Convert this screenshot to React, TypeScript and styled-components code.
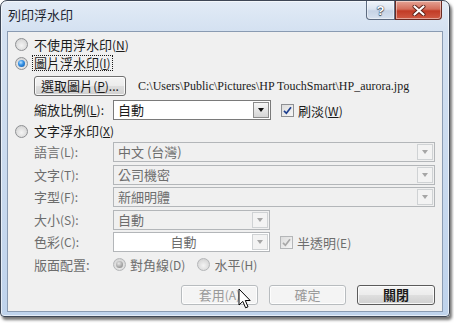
import styled, { createGlobalStyle } from "styled-components";

const GlobalStyle = createGlobalStyle`
  html, body {
    margin: 0;
    padding: 0;
    background: #ffffff;
  }
  body {
    font-family: "Noto Sans CJK TC", "Noto Sans", sans-serif;
    font-size: 13px;
    color: #1b1b1b;
  }
  #root {
    width: 454px;
    height: 323px;
    overflow: hidden;
  }
`;

const Frame = styled.div`
  position: relative;
  box-sizing: border-box;
  width: 450px;
  height: 317px;
  padding: 0 6px 4px 6px;
  display: flex;
  flex-direction: column;
  border: 1px solid #3e4756;
  border-radius: 7px 7px 4px 4px;
  background: linear-gradient(180deg, #e2ebf6 0px, #d4e1f1 30px, #bfd3ec 100%);
  box-shadow: 2px 3px 3px rgba(0, 0, 0, 0.55), inset 0 0 0 1px rgba(255, 255, 255, 0.6);
`;

const TitleBar = styled.div`
  height: 30px;
  flex-shrink: 0;
  display: flex;
  align-items: flex-start;
`;

const Title = styled.div`
  flex: 1;
  padding: 5px 0 0 1px;
  font-size: 13px;
  line-height: 18px;
  color: #1e2530;
`;

const CaptionButton = styled.div<{ $close?: boolean }>`
  box-sizing: border-box;
  width: ${({ $close }) => ($close ? 47 : 29)}px;
  height: 19px;
  display: flex;
  align-items: center;
  justify-content: center;
  border: 1px solid ${({ $close }) => ($close ? "#6b2a22" : "#5d6b80")};
  border-top: none;
  border-radius: ${({ $close }) => ($close ? "0 0 4px 0" : "0 0 0 4px")};
  background: ${({ $close }) =>
    $close
      ? "linear-gradient(180deg, #e5a395 0%, #d46f5c 45%, #c23b26 55%, #d05a44 100%)"
      : "linear-gradient(180deg, #f0f4fa 0%, #dbe4f0 45%, #c6d3e5 55%, #d6e1ef 100%)"};
  box-shadow: inset 0 0 0 1px rgba(255, 255, 255, 0.45);
  margin-right: ${({ $close }) => ($close ? "1px" : "0")};
`;

const HelpGlyph = styled.span`
  font-family: "Liberation Sans", sans-serif;
  font-weight: bold;
  font-size: 13px;
  line-height: 1;
  color: #ffffff;
  text-shadow: 0 0 1px #34445a, 0 0 1px #34445a, 0 1px 1px #34445a;
`;

const Client = styled.div`
  flex: 1;
  box-sizing: border-box;
  border: 1px solid #8a9bb2;
  background: #f0f0f0;
  display: flex;
  flex-direction: column;
`;

const OptionRow = styled.div<{ $top: number; $h: number }>`
  margin-top: ${({ $top }) => $top}px;
  height: ${({ $h }) => $h}px;
  display: flex;
  align-items: center;
  padding-left: 7px;
  gap: 4px;
  white-space: nowrap;
`;

const Radio = styled.span<{ $checked?: boolean; $disabled?: boolean }>`
  box-sizing: border-box;
  width: 13px;
  height: 13px;
  flex-shrink: 0;
  border-radius: 50%;
  border: 1px solid ${({ $disabled }) => ($disabled ? "#b4b6b8" : "#8e9093")};
  background: radial-gradient(circle at 50% 60%, #f4f4f4 0%, #dcdcdc 60%, #c9c9c9 100%);
  display: flex;
  align-items: center;
  justify-content: center;

  &::after {
    content: "";
    display: ${({ $checked }) => ($checked ? "block" : "none")};
    width: 7px;
    height: 7px;
    border-radius: 50%;
    background: ${({ $disabled }) =>
      $disabled
        ? "radial-gradient(circle at 40% 35%, #e8e8e8 0%, #a9a9a9 55%, #7d7d7d 100%)"
        : "radial-gradient(circle at 40% 35%, #bfe4ff 0%, #3793e6 40%, #0b4f9f 100%)"};
  }
`;

const OptionText = styled.span<{ $focus?: boolean; $dim?: boolean }>`
  line-height: 14px;
  padding: 0 1px;
  border: 1px ${({ $focus }) => ($focus ? "dotted #1b1b1b" : "solid transparent")};
  color: ${({ $dim }) => ($dim ? "#6d6d6d" : "#1b1b1b")};
`;

const Paren = styled.span`
  font-size: 12px;
`;

const PushButton = styled.button<{ $w: number; $disabled?: boolean; $strong?: boolean }>`
  box-sizing: border-box;
  width: ${({ $w }) => $w}px;
  height: 20px;
  padding: 0;
  font-family: "Noto Sans CJK TC", "Noto Sans", sans-serif;
  font-size: 13px;
  line-height: 18px;
  font-weight: ${({ $strong }) => ($strong ? 700 : 400)};
  color: ${({ $disabled }) => ($disabled ? "#9a9a9a" : "#1b1b1b")};
  border-radius: 3px;
  border: 1px solid ${({ $disabled, $strong }) => ($disabled ? "#b8bcbf" : $strong ? "#5b5b5b" : "#707070")};
  background: ${({ $disabled }) =>
    $disabled
      ? "#f4f4f4"
      : "linear-gradient(180deg, #f4f4f4 0%, #ececec 48%, #dedede 52%, #d0d0d0 100%)"};
  box-shadow: inset 0 0 0 1px rgba(255, 255, 255, 0.8);
  white-space: nowrap;
`;

const ButtonRow = styled.div`
  margin-top: 5px;
  height: 20px;
  display: flex;
  align-items: center;
  padding-left: 26px;
  gap: 12px;
  white-space: nowrap;
`;

const PathText = styled.span`
  font-family: "Liberation Serif", serif;
  font-size: 12px;
  color: #1b1b1b;
`;

const ScaleRow = styled.div`
  margin-top: 4px;
  height: 20px;
  display: flex;
  align-items: center;
  padding-left: 26px;
  white-space: nowrap;
`;

const FieldGrid = styled.div`
  margin-top: 3px;
  padding-left: 26px;
  display: grid;
  grid-template-columns: 79px auto;
  grid-auto-rows: 20px;
  row-gap: 2.5px;
  align-items: center;
  white-space: nowrap;
`;

const Label = styled.span<{ $dim?: boolean }>`
  color: ${({ $dim }) => ($dim ? "#6d6d6d" : "#1b1b1b")};
  line-height: 16px;
`;

const ControlLine = styled.div`
  display: flex;
  align-items: center;
  gap: 10px;
`;

const Combo = styled.div<{ $w: number; $enabled?: boolean; $white?: boolean }>`
  box-sizing: border-box;
  width: ${({ $w }) => $w}px;
  height: 20px;
  display: flex;
  align-items: stretch;
  padding: 1px;
  border: 1px solid ${({ $enabled }) => ($enabled ? "#7a7a7a" : "#b3b6b9")};
  background: ${({ $enabled, $white }) => ($enabled || $white ? "#ffffff" : "#f0f0f0")};
`;

const ComboText = styled.span<{ $center?: boolean; $dim?: boolean }>`
  flex: 1;
  padding-left: ${({ $center }) => ($center ? "0" : "3px")};
  text-align: ${({ $center }) => ($center ? "center" : "left")};
  line-height: 16px;
  color: ${({ $dim }) => ($dim ? "#6d6d6d" : "#1b1b1b")};
`;

const ComboArrow = styled.span<{ $enabled?: boolean }>`
  box-sizing: border-box;
  width: 16px;
  display: flex;
  align-items: center;
  justify-content: center;
  border: 1px solid ${({ $enabled }) => ($enabled ? "#8c8c8c" : "#cfd2d4")};
  background: ${({ $enabled }) =>
    $enabled ? "linear-gradient(180deg, #f7f7f7 0%, #e6e6e6 50%, #d5d5d5 100%)" : "#f3f3f3"};

  &::after {
    content: "";
    border-left: 3.5px solid transparent;
    border-right: 3.5px solid transparent;
    border-top: 4px solid ${({ $enabled }) => ($enabled ? "#111111" : "#a6a6a6")};
  }
`;

const CheckBox = styled.span<{ $disabled?: boolean }>`
  box-sizing: border-box;
  width: 13px;
  height: 13px;
  flex-shrink: 0;
  border: 1px solid ${({ $disabled }) => ($disabled ? "#b4b6b8" : "#8e9093")};
  background: linear-gradient(135deg, #dcdcdc 0%, #f6f6f6 100%);
  display: flex;
  align-items: center;
  justify-content: center;
`;

const CheckLabel = styled.span`
  display: flex;
  align-items: center;
  gap: 4px;
`;

const RadioGroup = styled.div`
  display: flex;
  align-items: center;
  gap: 4px;
  color: #6d6d6d;
`;

const Footer = styled.div`
  margin-top: 10px;
  display: flex;
  justify-content: flex-end;
  padding-right: 7px;
  gap: 11px;
`;

const Cursor = styled.svg`
  position: absolute;
  left: 237px;
  top: 287px;
`;

function Tick({ disabled }: { disabled?: boolean }) {
  return (
    <svg width="11" height="11" viewBox="0 0 11 11">
      <path
        d="M2 5.8 L4.4 8.3 L9 2.3"
        fill="none"
        stroke={disabled ? "#a8a8a8" : "#1d3f8f"}
        strokeWidth="1.7"
      />
    </svg>
  );
}

function CloseGlyph() {
  return (
    <svg width="14" height="11" viewBox="0 0 14 11">
      <path d="M2.5 1.5 L11.5 9.5 M11.5 1.5 L2.5 9.5" stroke="#5a2018" strokeWidth="4" strokeLinecap="round" />
      <path d="M2.5 1.5 L11.5 9.5 M11.5 1.5 L2.5 9.5" stroke="#ffffff" strokeWidth="2.2" strokeLinecap="round" />
    </svg>
  );
}

export default function App() {
  return (
    <>
      <GlobalStyle />
      <Frame>
        <TitleBar>
          <Title>列印浮水印</Title>
          <CaptionButton>
            <HelpGlyph>?</HelpGlyph>
          </CaptionButton>
          <CaptionButton $close>
            <CloseGlyph />
          </CaptionButton>
        </TitleBar>

        <Client>
          <OptionRow $top={5} $h={15}>
            <Radio />
            <OptionText>
              不使用浮水印<Paren>(<u>N</u>)</Paren>
            </OptionText>
          </OptionRow>
          <OptionRow $top={3} $h={16}>
            <Radio $checked />
            <OptionText $focus>
              圖片浮水印<Paren>(<u>I</u>)</Paren>
            </OptionText>
          </OptionRow>

          <ButtonRow>
            <PushButton $w={92}>
              選取圖片<Paren>(<u>P</u>)...</Paren>
            </PushButton>
            <PathText>{"C:\\Users\\Public\\Pictures\\HP TouchSmart\\HP_aurora.jpg"}</PathText>
          </ButtonRow>

          <ScaleRow>
            <Label style={{ width: 79 }}>
              縮放比例<Paren>(<u>L</u>):</Paren>
            </Label>
            <ControlLine>
              <Combo $w={158} $enabled>
                <ComboText>自動</ComboText>
                <ComboArrow $enabled />
              </Combo>
              <CheckLabel>
                <CheckBox>
                  <Tick />
                </CheckBox>
                <span>
                  刷淡<Paren>(<u>W</u>)</Paren>
                </span>
              </CheckLabel>
            </ControlLine>
          </ScaleRow>

          <OptionRow $top={3} $h={16}>
            <Radio />
            <OptionText>
              文字浮水印<Paren>(<u>X</u>)</Paren>
            </OptionText>
          </OptionRow>

          <FieldGrid>
            <Label $dim>
              語言<Paren>(L):</Paren>
            </Label>
            <Combo $w={322}>
              <ComboText $dim>中文 (台灣)</ComboText>
              <ComboArrow />
            </Combo>

            <Label $dim>
              文字<Paren>(T):</Paren>
            </Label>
            <Combo $w={322}>
              <ComboText $dim>公司機密</ComboText>
              <ComboArrow />
            </Combo>

            <Label $dim>
              字型<Paren>(F):</Paren>
            </Label>
            <Combo $w={322}>
              <ComboText $dim>新細明體</ComboText>
              <ComboArrow />
            </Combo>

            <Label $dim>
              大小<Paren>(S):</Paren>
            </Label>
            <Combo $w={157}>
              <ComboText $dim>自動</ComboText>
              <ComboArrow />
            </Combo>

            <Label $dim>
              色彩<Paren>(C):</Paren>
            </Label>
            <ControlLine>
              <Combo $w={157} $white>
                <ComboText $center $dim>
                  自動
                </ComboText>
                <ComboArrow />
              </Combo>
              <CheckLabel style={{ color: "#6d6d6d" }}>
                <CheckBox $disabled>
                  <Tick disabled />
                </CheckBox>
                <span>
                  半透明<Paren>(E)</Paren>
                </span>
              </CheckLabel>
            </ControlLine>

            <Label $dim>版面配置:</Label>
            <ControlLine style={{ gap: 12 }}>
              <RadioGroup>
                <Radio $checked $disabled />
                <span>
                  對角線<Paren>(D)</Paren>
                </span>
              </RadioGroup>
              <RadioGroup>
                <Radio $disabled />
                <span>
                  水平<Paren>(H)</Paren>
                </span>
              </RadioGroup>
            </ControlLine>
          </FieldGrid>

          <Footer>
            <PushButton $w={77} $disabled>
              套用<Paren>(A)</Paren>
            </PushButton>
            <PushButton $w={77} $disabled>
              確定
            </PushButton>
            <PushButton $w={78} $strong>
              關閉
            </PushButton>
          </Footer>
        </Client>

        <Cursor width="14" height="22" viewBox="0 0 14 22">
          <path
            d="M1 1 L1 17 L4.8 13.4 L7.6 19.8 L10 18.8 L7.3 12.5 L12.2 12.5 Z"
            fill="#ffffff"
            stroke="#000000"
            strokeWidth="1"
            strokeLinejoin="round"
          />
        </Cursor>
      </Frame>
    </>
  );
}
